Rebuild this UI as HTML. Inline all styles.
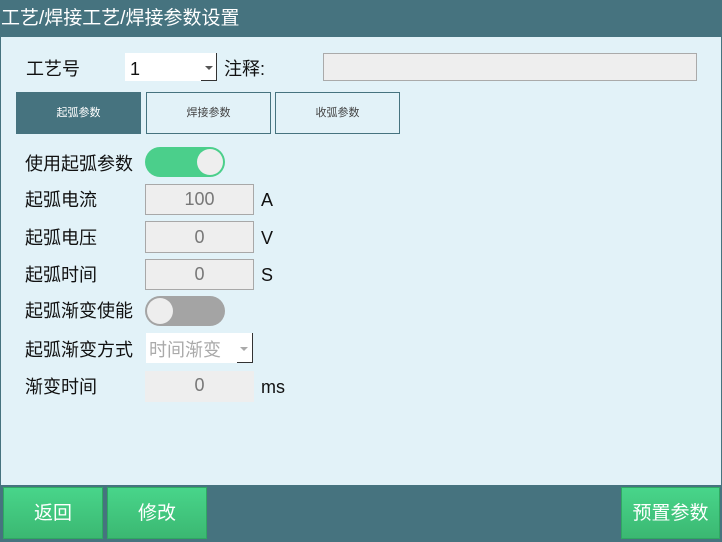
<!DOCTYPE html><html><head><meta charset="utf-8"><style>
*{margin:0;padding:0;box-sizing:border-box}
body{width:722px;height:542px;background:#46737f;position:relative;overflow:hidden;font-family:"Liberation Sans","Noto Sans CJK SC",sans-serif;color:#111}
.a{position:absolute}
.main{left:1px;top:37px;width:720px;height:448px;background:#e2f2f8}
.t{font-size:18px;line-height:20px;white-space:nowrap}
.box{background:#eeeeee;border:1px solid #a8a8a8;color:#777;font-size:18px;text-align:center}
.btn{background:linear-gradient(#48d58a,#3bb872);border:1px solid #2fa862;color:#fff;font-size:19px;text-align:center;line-height:48px}
</style></head><body>
<div class="a t" style="left:1px;top:9px;color:#fff;font-size:19px">工艺/焊接工艺/焊接参数设置</div>
<div class="a main"></div>
<div class="a t" style="left:26px;top:59px">工艺号</div>
<div class="a" style="left:125px;top:53px;width:92px;height:28px;background:#fff"></div>
<div class="a t" style="left:130px;top:59px">1</div>
<div class="a" style="left:201px;top:53px;width:16px;height:28px;border-right:1px solid #333;border-bottom:1px solid #333;"></div>
<div class="a" style="left:205px;top:66px;border:4px solid transparent;border-top:4px solid #555"></div>
<div class="a t" style="left:224px;top:59px">注释:</div>
<div class="a" style="left:323px;top:53px;width:374px;height:28px;background:#eee;border:1px solid #aaa"></div>
<div class="a" style="left:16px;top:92px;width:125px;height:42px;background:#46737f;color:#fff;font-size:11px;text-align:center;line-height:42px">起弧参数</div>
<div class="a" style="left:146px;top:92px;width:125px;height:42px;border:1px solid #46737f;color:#444;font-size:11px;text-align:center;line-height:40px">焊接参数</div>
<div class="a" style="left:275px;top:92px;width:125px;height:42px;border:1px solid #46737f;color:#444;font-size:11px;text-align:center;line-height:40px">收弧参数</div>
<div class="a t" style="left:25px;top:154px">使用起弧参数</div>
<div class="a" style="left:145px;top:147px;width:80px;height:30px;border-radius:15px;background:#4bcf8b"></div>
<div class="a" style="left:197px;top:149px;width:26px;height:26px;border-radius:13px;background:#eee"></div>
<div class="a t" style="left:25px;top:190px">起弧电流</div>
<div class="a box" style="left:145px;top:184px;width:109px;height:31px;line-height:29px">100</div>
<div class="a t" style="left:261px;top:190px">A</div>
<div class="a t" style="left:25px;top:228px">起弧电压</div>
<div class="a box" style="left:145px;top:221px;width:109px;height:32px;line-height:30px">0</div>
<div class="a t" style="left:261px;top:228px">V</div>
<div class="a t" style="left:25px;top:265px">起弧时间</div>
<div class="a box" style="left:145px;top:259px;width:109px;height:31px;line-height:29px">0</div>
<div class="a t" style="left:261px;top:265px">S</div>
<div class="a t" style="left:25px;top:301px">起弧渐变使能</div>
<div class="a" style="left:145px;top:296px;width:80px;height:30px;border-radius:15px;background:#a4a4a4"></div>
<div class="a" style="left:147px;top:298px;width:26px;height:26px;border-radius:13px;background:#eee"></div>
<div class="a t" style="left:25px;top:340px">起弧渐变方式</div>
<div class="a" style="left:146px;top:333px;width:107px;height:30px;background:#fff"></div>
<div class="a t" style="left:149px;top:340px;color:#aaa">时间渐变</div>
<div class="a" style="left:237px;top:333px;width:16px;height:30px;border-right:1px solid #333;border-bottom:1px solid #333"></div>
<div class="a" style="left:240px;top:347px;border:4px solid transparent;border-top:4px solid #aaa"></div>
<div class="a t" style="left:25px;top:377px">渐变时间</div>
<div class="a box" style="left:145px;top:371px;width:109px;height:31px;line-height:29px;border:none">0</div>
<div class="a t" style="left:261px;top:377px">ms</div>
<div class="a btn" style="left:3px;top:487px;width:72px;height:52px;line-height:52px;width:100px">返回</div>
<div class="a btn" style="left:107px;top:487px;width:100px;height:52px;line-height:52px">修改</div>
<div class="a btn" style="left:621px;top:487px;width:99px;height:52px;line-height:52px">预置参数</div>
</body></html>
